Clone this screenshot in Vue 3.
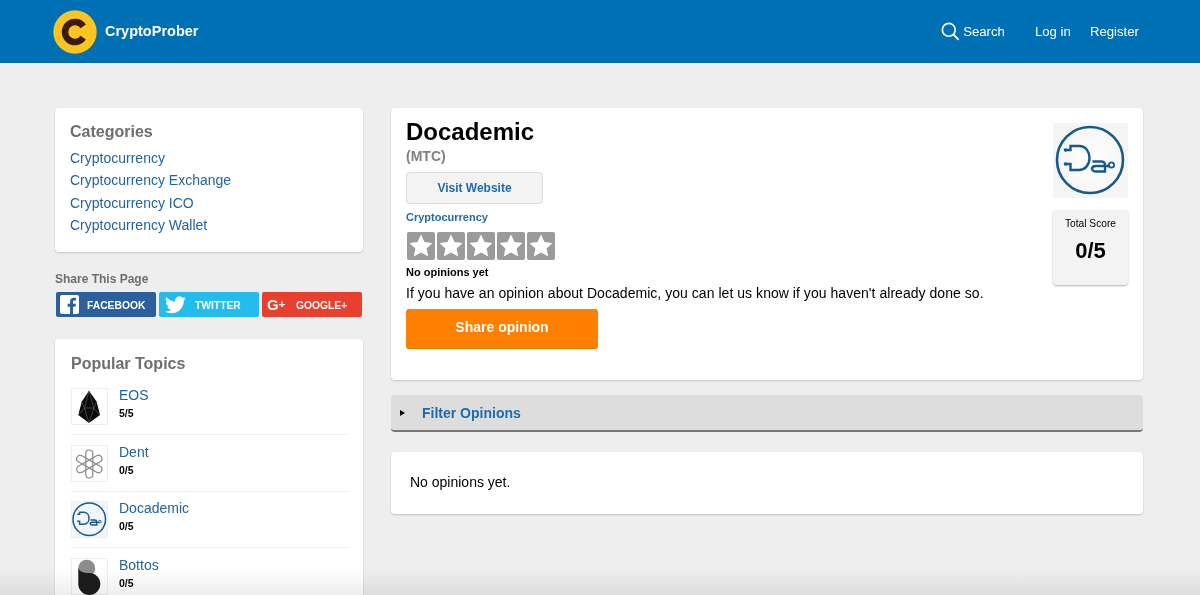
<script setup>
const categories = ['Cryptocurrency', 'Cryptocurrency Exchange', 'Cryptocurrency ICO', 'Cryptocurrency Wallet']
const topics = [
  { name: 'EOS', score: '5/5', icon: 'eos' },
  { name: 'Dent', score: '0/5', icon: 'dent' },
  { name: 'Docademic', score: '0/5', icon: 'doc' },
  { name: 'Bottos', score: '0/5', icon: 'bottos' }
]
const stars = [1, 2, 3, 4, 5]
const docStem = 'M12.5 27H17.500V23H26C33 23 36.500 29 36.500 35C36.500 42 32 47 26 47H17.500V41H12.500'
const docA = 'M39.500 38.500H48C50.500 38.500 52 40 52 42V48.500H43C40.500 48.500 39 47 39 45.700C39 44 40.500 43 43 43H52M52 43H55.500V42.500'
</script>

<template>
  <div class="page">
    <header class="topbar">
      <div class="brand">
        <svg class="brand-logo" viewBox="0 0 44 44">
          <circle cx="22" cy="22" r="21.700" fill="#fcc421" />
          <path d="M30.200 16.300A10 10 0 1 0 30.200 27.700" fill="none" stroke="#3a1c0a" stroke-width="6.500" />
        </svg>
        <span class="brand-name">CryptoProber</span>
      </div>
      <nav class="nav">
        <a class="nav-search">
          <svg class="search-icon" viewBox="0 0 20 20">
            <circle cx="8.200" cy="8.200" r="6.800" fill="none" stroke="#fff" stroke-width="1.700" />
            <path d="M13 13l5.600 5.800" fill="none" stroke="#fff" stroke-width="2" />
          </svg>
          Search
        </a>
        <a class="nav-login">Log in</a>
        <a>Register</a>
      </nav>
    </header>

    <div class="content">
      <aside class="side">
        <section class="card cats">
          <h3>Categories</h3>
          <a v-for="c in categories" :key="c" class="cat">{{ c }}</a>
        </section>

        <div class="share-title">Share This Page</div>
        <div class="share">
          <a class="sbtn fb">
            <svg class="sico" viewBox="0 0 20 20">
              <rect width="20" height="20" rx="2" fill="#fff" />
              <path d="M10.600 20v-7.700H8V9.300h2.600V7c0-2.600 1.600-4 3.900-4 1.100 0 2 .1 2.300.1v2.700h-1.600c-1.300 0-1.500.6-1.500 1.500v2h3l-.4 3h-2.600V20z" fill="#2c5f9e" />
            </svg>
            <span class="sl">FACEBOOK</span>
          </a>
          <a class="sbtn tw">
            <svg class="sico tw-ico" viewBox="0 0 24 20">
              <path d="M24 2.400a9.800 9.800 0 0 1-2.800.8A4.900 4.900 0 0 0 23.300.5a9.800 9.800 0 0 1-3.100 1.200A4.900 4.900 0 0 0 11.800 6.200 13.900 13.900 0 0 1 1.700.9a4.900 4.900 0 0 0 1.500 6.600 4.900 4.900 0 0 1-2.200-.6c0 2.400 1.700 4.400 3.900 4.900a4.900 4.900 0 0 1-2.200.1 4.900 4.900 0 0 0 4.600 3.400A9.900 9.900 0 0 1 0 17.300 13.900 13.900 0 0 0 7.500 19.500c9.100 0 14.300-7.700 14-14.600A10 10 0 0 0 24 2.400z" fill="#fff" />
            </svg>
            <span class="sl">TWITTER</span>
          </a>
          <a class="sbtn gp">
            <span class="gp-mark">G<small>+</small></span>
            <span class="sl">GOOGLE+</span>
          </a>
        </div>

        <section class="card topics">
          <h3>Popular Topics</h3>
          <div v-for="t in topics" :key="t.name" class="topic">
            <div class="thumb" :class="{ tinted: t.icon === 'doc' }">
              <svg v-if="t.icon === 'eos'" viewBox="0 0 37 37">
                <path d="M18 2.700L10.700 13.700 7.300 27 18 35 29 27 25.700 13.700z" fill="#0a0a0a" />
                <path d="M18 2.700L13.500 20 18 35 22.800 20zM10.700 13.700L13.500 20 7.300 27M25.700 13.700L22.800 20 29 27M13.500 20H22.800" fill="none" stroke="#666" stroke-width=".6" />
              </svg>
              <svg v-else-if="t.icon === 'dent'" viewBox="0 0 37 37">
                <g fill="none" stroke="#888" stroke-width="1.200">
                  <rect x="14.800" y="5" width="7" height="28" rx="3.500" />
                  <rect x="14.800" y="5" width="7" height="28" rx="3.500" transform="rotate(60 18.300 19)" />
                  <rect x="14.800" y="5" width="7" height="28" rx="3.500" transform="rotate(120 18.300 19)" />
                </g>
              </svg>
              <svg v-else-if="t.icon === 'doc'" viewBox="0 0 75 75">
                <circle cx="37" cy="37" r="33" fill="none" stroke="#145a8a" stroke-width="3" />
                <path :d="docStem" fill="none" stroke="#145a8a" stroke-width="3" />
                <path :d="docA" fill="none" stroke="#145a8a" stroke-width="3" />
                <circle cx="58.500" cy="42" r="2.600" fill="none" stroke="#145a8a" stroke-width="2" />
              </svg>
              <svg v-else viewBox="0 0 37 37">
                <circle cx="15.700" cy="10.200" r="8.500" fill="#8c8c8c" />
                <path d="M7.300 10V26A11 11 0 1 0 18.300 15C12 15 8 13 7.300 10z" fill="#1c1c1c" />
              </svg>
            </div>
            <div class="topic-info">
              <a class="topic-name">{{ t.name }}</a>
              <div class="topic-score">{{ t.score }}</div>
            </div>
          </div>
        </section>
      </aside>

      <main class="main">
        <section class="card detail">
          <div class="detail-left">
            <h1>Docademic</h1>
            <div class="ticker">(MTC)</div>
            <a class="visit">Visit Website</a>
            <a class="detail-cat">Cryptocurrency</a>
            <div class="stars">
              <span v-for="s in stars" :key="s" class="star">
                <svg viewBox="0 0 28 28">
                  <path d="M14 2.500l3.500 7.400 8 1-5.900 5.500 1.600 8L14 20.500l-7.200 3.900 1.600-8-5.900-5.500 8-1z" fill="#fff" />
                </svg>
              </span>
            </div>
            <div class="no-op">No opinions yet</div>
            <p class="invite">If you have an opinion about Docademic, you can let us know if you haven't already done so.</p>
            <a class="share-op">Share opinion</a>
          </div>
          <div class="detail-right">
            <div class="logo-box">
              <svg viewBox="0 0 75 75">
                <circle cx="37" cy="37" r="33" fill="none" stroke="#145a8a" stroke-width="2.600" />
                <path :d="docStem" fill="none" stroke="#145a8a" stroke-width="2.400" />
                <path :d="docA" fill="none" stroke="#145a8a" stroke-width="2.400" />
                <circle cx="12.500" cy="27" r="1.800" fill="#145a8a" />
                <circle cx="12.500" cy="41" r="1.800" fill="#145a8a" />
                <circle cx="58.500" cy="42" r="2.600" fill="none" stroke="#145a8a" stroke-width="1.800" />
              </svg>
            </div>
            <div class="score-box">
              <div class="score-label">Total Score</div>
              <div class="score-val">0/5</div>
            </div>
          </div>
        </section>

        <div class="filter">
          <span class="tri"></span>
          <span class="filter-text">Filter Opinions</span>
        </div>

        <section class="card empty">No opinions yet.</section>
      </main>
    </div>
    <div class="fade"></div>
  </div>
</template>

<style>
html, body { margin: 0; height: 595px; overflow: hidden; background: #eee; }
</style>

<style scoped>
.page { position: relative; height: 595px; overflow: hidden; background: #eee; font-family: "Liberation Sans", Arial, sans-serif; color: #000; }
.topbar { height: 63px; background: #0070b5; display: flex; align-items: center; justify-content: space-between; padding: 0 61px 0 53px; color: #fff; }
.brand { display: flex; align-items: center; gap: 8px; }
.brand-logo { width: 44px; height: 44px; display: block; }
.brand-name { font-weight: bold; font-size: 14.500px; margin-bottom: 2px; }
.nav { display: flex; align-items: center; gap: 19px; font-size: 13.200px; margin-bottom: 1px; }
.nav-search { display: flex; align-items: center; gap: 3px; margin-right: 11px; }
.search-icon { width: 19px; height: 19px; }
.content { display: flex; padding: 44.500px 57px 0 55px; gap: 28px; align-items: flex-start; }
.side { width: 308px; flex: none; }
.main { flex: 1; min-width: 0; }
.card { background: #fff; border-radius: 4px; box-shadow: 0 1px 2px rgba(0,0,0,.18); box-sizing: border-box; }
h3 { margin: 0; font-size: 16px; line-height: 20px; color: #6e6e6e; font-weight: bold; }
.cats { height: 144.500px; padding: 14px 15px; }
.cats h3 { margin-bottom: 5px; }
.cat { display: block; font-size: 14px; line-height: 22.500px; color: #23649f; }
.share-title { margin-top: 20px; font-size: 12px; line-height: 14px; font-weight: bold; color: #6e6e6e; }
.share { display: flex; gap: 3px; margin: 6px 1px 0; }
.sbtn { width: 100px; height: 25px; border-radius: 2px; display: flex; align-items: center; color: #fff; font-size: 10.300px; font-weight: bold; box-sizing: border-box; }
.sl { margin-top: 2px; }
.fb { background: #2c5f9e; padding-left: 4px; gap: 8px; }
.tw { background: #22bced; padding-left: 6px; gap: 9px; }
.gp { background: #e83f2e; padding-left: 5px; gap: 9px; }
.sico { width: 19px; height: 19px; display: block; }
.tw-ico { width: 21px; height: 18px; }
.gp-mark { font-size: 15px; font-weight: bold; width: 20px; }
.gp-mark small { font-size: 11px; vertical-align: 2px; }
.topics { margin-top: 22px; padding: 14px 15px 0 16px; height: 320px; }
.topics h3 { margin: 1px 0 14px; }
.topic { display: flex; gap: 11px; height: 46px; margin-bottom: 9.500px; border-bottom: 1px solid #eee; }
.thumb { width: 37px; height: 37px; box-shadow: inset 0 0 0 1px #eee; flex: none; }
.thumb svg { width: 37px; height: 37px; display: block; }
.tinted { background: #f3f6f9; }
.topic-name { display: block; font-size: 14px; line-height: 14px; color: #23649f; }
.topic-score { font-size: 10.500px; line-height: 12px; font-weight: bold; margin-top: 5px; }
.detail { height: 272.500px; padding: 10.500px 15px; display: flex; justify-content: space-between; }
h1 { margin: 0; font-size: 24px; line-height: 28px; font-weight: bold; }
.ticker { font-size: 14px; line-height: 16px; font-weight: bold; color: #808080; margin-top: 2px; }
.visit { display: block; width: 137px; height: 32px; margin-top: 8px; box-sizing: border-box; background: #f3f3f3; border: 1px solid #ddd; border-radius: 4px; text-align: center; line-height: 30px; font-size: 12px; font-weight: bold; color: #1f6bab; }
.detail-cat { display: block; font-size: 11px; line-height: 12px; font-weight: bold; color: #1f6bab; margin-top: 7px; }
.stars { display: flex; gap: 2px; margin: 9px 0 0 1px; }
.star { width: 28px; height: 28px; background: #9b9b9b; border-radius: 2px; }
.star svg { width: 28px; height: 28px; display: block; }
.no-op { font-size: 11px; line-height: 12px; font-weight: bold; margin-top: 6px; }
.invite { margin: 7px 0 0; font-size: 14px; line-height: 16px; letter-spacing: .04px; }
.share-op { display: block; width: 192px; height: 40px; margin-top: 8px; background: #ff8000; border-radius: 3px; border-bottom: 1px solid #e87500; box-sizing: border-box; text-align: center; line-height: 37px; font-size: 14px; font-weight: bold; color: #fff; }
.detail-right { width: 75px; padding-top: 5px; }
.logo-box { width: 75px; height: 75px; background: radial-gradient(circle at center, #fff 0, #f5f5f5 70%); }
.logo-box svg { width: 75px; height: 75px; display: block; }
.score-box { width: 75px; height: 75px; margin-top: 12px; background: #f3f3f3; border-radius: 4px; box-shadow: 0 1px 2px rgba(0,0,0,.3); text-align: center; }
.score-label { font-size: 10.200px; line-height: 12px; padding-top: 8px; }
.score-val { font-size: 22px; line-height: 26px; font-weight: bold; margin-top: 8px; }
.filter { height: 37px; margin-top: 15px; background: #ddd; border-bottom: 2px solid #777; border-radius: 4px; box-sizing: border-box; display: flex; align-items: center; padding-left: 9px; }
.tri { width: 0; height: 0; border-left: 5px solid #000; border-top: 3.500px solid transparent; border-bottom: 3.500px solid transparent; }
.filter-text { margin-left: 17px; font-size: 14px; font-weight: bold; color: #1f6bab; }
.empty { height: 62px; margin-top: 20px; padding: 0 0 2px 19px; display: flex; align-items: center; font-size: 14px; }
.fade { position: absolute; left: 0; right: 0; bottom: 0; height: 26px; pointer-events: none; mix-blend-mode: multiply; background: linear-gradient(to bottom, #fff, #eee); }
</style>
